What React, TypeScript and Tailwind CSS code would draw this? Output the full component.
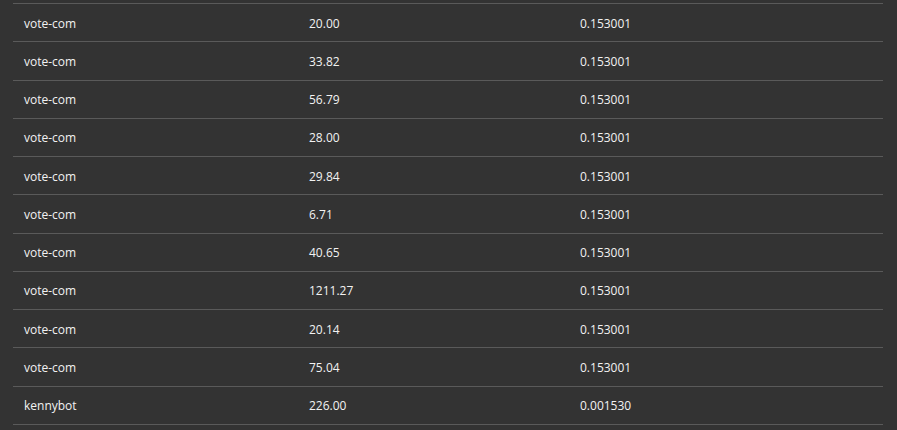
import React from 'react';

const rows: [string, string, string][] = [
  ['vote-com', '20.00', '0.153001'],
  ['vote-com', '33.82', '0.153001'],
  ['vote-com', '56.79', '0.153001'],
  ['vote-com', '28.00', '0.153001'],
  ['vote-com', '29.84', '0.153001'],
  ['vote-com', '6.71', '0.153001'],
  ['vote-com', '40.65', '0.153001'],
  ['vote-com', '1211.27', '0.153001'],
  ['vote-com', '20.14', '0.153001'],
  ['vote-com', '75.04', '0.153001'],
  ['kennybot', '226.00', '0.001530'],
];

export default function App() {
  return (
    <div
      className="w-[897px] h-[430px] overflow-hidden bg-[#333333] pt-[3px] px-[13px] text-[#f2f2f2] text-[12px]"
      style={{ fontFamily: '"Open Sans", "Noto Sans", sans-serif' }}
    >
      <div className="w-[870px] border-b border-[#5a5a5a]">
        {rows.map((r, i) => (
          <div
            key={i}
            className="grid grid-cols-[285px_271px_314px] items-center h-[38.27px] pt-[2px] border-t border-[#5a5a5a]"
          >
            <div className="pl-[11px]">{r[0]}</div>
            <div className="pl-[11px]">{r[1]}</div>
            <div className="pl-[11px]">{r[2]}</div>
          </div>
        ))}
      </div>
    </div>
  );
}
